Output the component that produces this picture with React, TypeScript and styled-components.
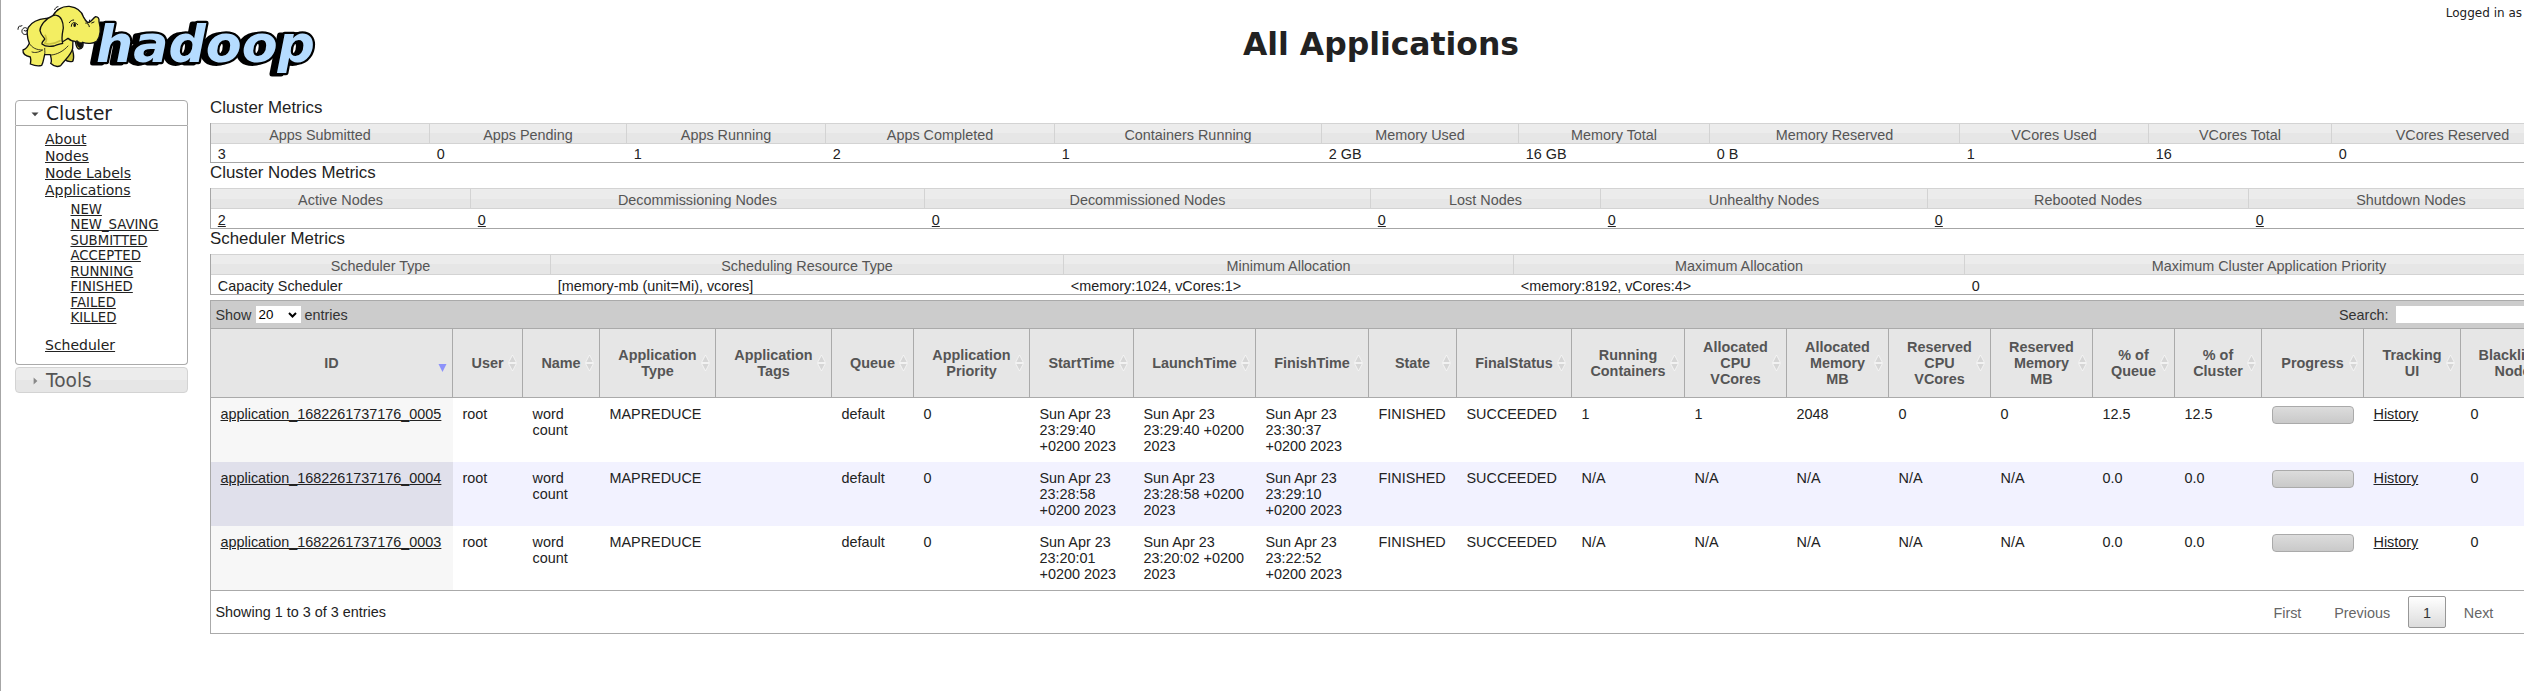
import React from "react";
import styled, { createGlobalStyle } from "styled-components";

const GlobalStyle = createGlobalStyle`
  * { box-sizing: border-box; }
  body { margin: 0; background: #fff; overflow: hidden; }
`;

const SANS = `"Liberation Sans", Arial, Helvetica, sans-serif`;
const VERA = `"DejaVu Sans", Verdana, sans-serif`;

const Page = styled.div`
  width: 100vw;
  height: 691px;
  overflow: hidden;
  border-left: 1px solid #a6a6a6;
  background: #fff;
  color: #222;
  font-family: ${SANS};
  font-size: 14.4px;
`;

const Header = styled.header`
  display: grid;
  grid-template-columns: 1242px auto 1fr;
  height: 100px;
  font-family: ${VERA};
`;

const Title = styled.h1`
  margin: 0;
  padding-top: 26px;
  font-size: 31.45px;
  line-height: 37px;
  white-space: nowrap;
`;

const UserInfo = styled.div`
  justify-self: end;
  padding: 6px 2px 0 0;
  font-size: 12px;
  line-height: 14px;
  white-space: nowrap;
`;

const Columns = styled.div`
  display: flex;
  align-items: flex-start;
`;

const Sidebar = styled.nav`
  flex: none;
  width: 173px;
  margin: 0 22px 0 14px;
  font-family: ${VERA};
`;

const SectionHead = styled.h3<{ $open?: boolean }>`
  display: flex;
  align-items: center;
  gap: 7px;
  height: 26px;
  margin: 0;
  padding: 1px 0 0 15px;
  border: 1px solid ${(p) => (p.$open ? "#aaa" : "#d3d3d3")};
  border-radius: ${(p) => (p.$open ? "4px 4px 0 0" : "4px")};
  background: ${(p) => (p.$open ? "#fff" : "linear-gradient(#ececec 0 50%, #e6e6e6 50%)")};
  color: ${(p) => (p.$open ? "#212121" : "#555")};
  font-size: 18.6px;
  font-weight: normal;
  line-height: 24px;
`;

const SectionBody = styled.div`
  height: 239px;
  margin-bottom: 2px;
  padding: 5px 0 0 29px;
  border: 1px solid #aaa;
  border-top: 0;
  border-radius: 0 0 4px 4px;
  font-size: 14px;
`;

const List = styled.ul<{ $nested?: boolean }>`
  margin: ${(p) => (p.$nested ? "3px 0 11px 25.5px" : "0")};
  padding: 0;
  list-style: none;
  font-size: ${(p) => (p.$nested ? "13.25px" : "14px")};
  line-height: ${(p) => (p.$nested ? "15.45px" : "17px")};
`;

const Link = styled.a`
  color: #222;
  text-decoration: underline;
`;

const Main = styled.main`
  flex: none;
  width: 2364px;
`;

const Heading = styled.h3`
  height: 23px;
  margin: 0;
  font-size: 16.85px;
  font-weight: normal;
  line-height: 16px;
`;

const Metrics = styled.section<{ $cols: string; $height: number }>`
  display: grid;
  grid-template-columns: ${(p) => p.$cols};
  grid-template-rows: 21px 1fr;
  height: ${(p) => p.$height}px;
  margin-bottom: 2px;
  border-left: 1px solid #a6a6a6;
  border-bottom: 1px solid #a6a6a6;
`;

const MetricHead = styled.div`
  border: 1px solid #d3d3d3;
  border-left-width: 0;
  background: linear-gradient(#ececec 0 50%, #e6e6e6 50%);
  color: #555;
  line-height: 23px;
  height: 21px;
  text-align: center;
  white-space: nowrap;
`;

const MetricValue = styled.div<{ $top: number }>`
  padding: ${(p) => p.$top}px 0 0 6.8px;
  line-height: 16px;
  white-space: nowrap;
`;

const Toolbar = styled.div`
  display: flex;
  align-items: center;
  height: 28px;
  margin-top: 5px;
  padding: 0 0 0 4.5px;
  border: 1px solid #aaa;
  border-bottom-width: 0;
  background: #ccc;
  color: #333;
  line-height: 18px;
`;

const PageSize = styled.div`
  display: flex;
  align-items: center;
  justify-content: space-between;
  width: 45px;
  height: 17px;
  margin: 0 4px 0 4px;
  padding: 0 4px 0 3px;
  background: #fff;
  color: #000;
  font-size: 13.33px;
`;

const SearchLabel = styled.label`
  display: flex;
  align-items: center;
  gap: 7px;
  width: 234px;
  margin-left: auto;
`;

const SearchBox = styled.input`
  width: 170px;
  height: 17px;
  padding: 0;
  border: 0;
  background: #fff;
`;

const AppTable = styled.table`
  width: 2364px;
  table-layout: fixed;
  border-collapse: separate;
  border-spacing: 0;
  border-left: 1px solid #aaa;
  border-right: 1px solid #aaa;
`;

const HeadCell = styled.th`
  height: 70px;
  padding: 0 0 1px;
  border: 1px solid #aaa;
  border-left-width: 0;
  background: #e6e6e6;
  color: #555;
  line-height: 16px;
  white-space: pre-line;
  vertical-align: middle;
  position: relative;
`;

const SortMark = styled.svg`
  position: absolute;
  right: 5px;
  top: 25px;
`;

const Cell = styled.td<{ $first?: boolean; $even?: boolean }>`
  height: 64px;
  padding: 8px 0 0 9.5px;
  background: ${(p) => (p.$first ? (p.$even ? "#e0e0eb" : "#f7f7f7") : p.$even ? "#f2f2ff" : "#fff")};
  line-height: 16px;
  white-space: pre-line;
  vertical-align: top;
`;

const Progress = styled.div`
  width: 82px;
  height: 18px;
  border: 1px solid #aaa;
  border-radius: 4px;
  background: linear-gradient(#dcdcdc, #c9c9c9);
`;

const Footer = styled.footer`
  display: flex;
  align-items: center;
  justify-content: space-between;
  height: 44px;
  padding-left: 4.5px;
  border: 1px solid #aaa;
`;

const Pager = styled.div`
  display: flex;
  gap: 2px;
  width: 315px;
`;

const PageButton = styled.span<{ $current?: boolean }>`
  height: 32px;
  padding: 0 14.4px;
  border: 1px solid ${(p) => (p.$current ? "#979797" : "transparent")};
  border-radius: 2px;
  background: ${(p) => (p.$current ? "linear-gradient(#fff, #dcdcdc)" : "none")};
  color: ${(p) => (p.$current ? "#333" : "#666")};
  line-height: 32px;
`;

function Logo() {
  const word = {
    fontFamily: '"DejaVu Sans"',
    fontWeight: "bold",
    fontStyle: "oblique",
    fontSize: 52,
    textLength: 219,
    lengthAdjust: "spacingAndGlyphs",
    strokeLinejoin: "round",
    paintOrder: "stroke",
  } as const;
  return (
    <svg width="330" height="84" viewBox="1 0 330 84">
      <text {...word} x="91" y="62.5" fill="#000" stroke="#000" strokeWidth="5">hadoop</text>
      <text {...word} x="96" y="62" fill="#b5dcff" stroke="#000" strokeWidth="4.5">hadoop</text>
      <g transform="translate(10 0) scale(.33333)" stroke="#111" strokeWidth="4" strokeLinejoin="round" strokeLinecap="round" fill="#f3ee62">
        <path d="M54 100C45 108 34 102 36 91C38 82 50 80 52 88C53 94 43 95 42 91M24 88C24 82 27 78 30 77M32 80L36 76M134 29C136 23 140 20 144 20M139 33L143 28" fill="none" strokeWidth="3" />
        <path d="M164 178C170 184 180 186 188 184C194 174 190 150 182 136L158 150Z" fill="#cfc93e" />
        <path d="M108 55C85 57 65 66 55 82C49 96 51 112 58 130C52 144 46 148 39 150C38 160 46 168 61 171C64 180 62 186 61 192C73 197 85 199 95 196C100 188 101 176 104 164L121 164C123 174 127 184 122 190C130 198 142 202 152 197C164 180 184 165 188 145L190 90L140 52Z" />
        <path d="M58 130C66 144 80 150 98 150C88 156 76 160 66 156M124 165C140 164 160 154 174 138M104 164C106 154 103 148 104 145" fill="none" strokeWidth="2.5" />
        <path d="M127 49C140 27 158 18 178 19C200 22 216 34 221 52C226 60 230 66 235 68C244 66 249 54 257 50C264 50 268 55 267 65C273 86 271 110 260 124C250 131 231 132 218 127C221 137 218 147 207 147C199 145 198 134 196 124C188 124 180 121 174 115C160 124 152 130 144 130L126 90Z" />
        <path d="M202 122C210 130 216 128 218 126C220 137 216 145 209 144C202 141 200 131 198 124Z" fill="#111" strokeWidth="2" />
        <path d="M127 48C105 56 90 78 90 92C92 105 101 112 105 117C98 124 95 129 96 132C105 140 121 140 132 138C144 132 154 132 158 130C153 113 158 96 160 84C160 66 153 48 140 46C136 45 131 46 127 48Z" />
        <path d="M106 106C110 116 112 122 104 130C122 135 140 128 150 122" fill="none" stroke="#c8c13e" strokeWidth="5" />
        <path d="M184 79C185 65 194 64 203 74M227 69C231 68 237 73 238 80M226 62L231 67M239 60L237 68M245 69L252 66M178 68C182 62 186 60 191 60" fill="none" strokeWidth="3" />
        <ellipse cx="194" cy="75" rx="4" ry="6" fill="#111" stroke="none" />
      </g>
    </svg>
  );
}

const Triangle = ({ down }: { down?: boolean }) => (
  <svg width="8" height="8" viewBox="0 0 8 8">
    {down ? <path d="M.5 2.5h7L4 6.3z" fill="#454545" /> : <path d="M2.6 .5v7L6.4 4z" fill="#888" />}
  </svg>
);

function SortIcon({ active }: { active?: boolean }) {
  return (
    <SortMark width="9" height="18" viewBox="0 0 9 18">
      {active ? (
        <path d="M.5 10h8l-4 8z" fill="#8d92fa" />
      ) : (
        <g fill="#d6d6d6" stroke="#f8f8f8" strokeWidth=".8">
          <path d="M4.5 1L8.4 8.5H.6z" />
          <path d="M.6 9.5h7.8L4.5 17z" />
        </g>
      )}
    </SortMark>
  );
}

type MetricTableProps = {
  title: string;
  cols: number[];
  heads: string[];
  values: string[];
  height: number;
  top: number;
  linked?: boolean;
};

function MetricTable({ title, cols, heads, values, height, top, linked }: MetricTableProps) {
  return (
    <>
      <Heading>{title}</Heading>
      <Metrics $cols={cols.map((c) => `${c}px`).join(" ")} $height={height}>
        {heads.map((h) => (
          <MetricHead key={h}>{h}</MetricHead>
        ))}
        {values.map((v, i) => (
          <MetricValue key={i} $top={top}>
            {linked ? <Link>{v}</Link> : v}
          </MetricValue>
        ))}
      </Metrics>
    </>
  );
}

const states = ["NEW", "NEW_SAVING", "SUBMITTED", "ACCEPTED", "RUNNING", "FINISHED", "FAILED", "KILLED"];

const columns: [string, number][] = [
  ["ID", 242], ["User", 70], ["Name", 77], ["Application\nType", 116], ["Application\nTags", 116],
  ["Queue", 82], ["Application\nPriority", 116], ["StartTime", 104], ["LaunchTime", 122], ["FinishTime", 113],
  ["State", 88], ["FinalStatus", 115], ["Running\nContainers", 113], ["Allocated\nCPU\nVCores", 102],
  ["Allocated\nMemory\nMB", 102], ["Reserved\nCPU\nVCores", 102], ["Reserved\nMemory\nMB", 102],
  ["% of\nQueue", 82], ["% of\nCluster", 87], ["Progress", 102], ["Tracking\nUI", 97], ["Blacklisted\nNodes", 112],
];

const day = "Sun Apr 23";
const apps = [
  { id: "0005", start: "23:29:40", launch: "23:29:40", finish: "23:30:37", used: ["1", "1", "2048", "0", "0"], pct: "12.5" },
  { id: "0004", start: "23:28:58", launch: "23:28:58", finish: "23:29:10", used: Array(5).fill("N/A"), pct: "0.0" },
  { id: "0003", start: "23:20:01", launch: "23:20:02", finish: "23:22:52", used: Array(5).fill("N/A"), pct: "0.0" },
];

export default function App() {
  return (
    <Page>
      <GlobalStyle />
      <Header>
        <Logo />
        <Title>All Applications</Title>
        <UserInfo>Logged in as</UserInfo>
      </Header>
      <Columns>
        <Sidebar>
          <SectionHead $open><Triangle down />Cluster</SectionHead>
          <SectionBody>
            <List>
              <li><Link>About</Link></li>
              <li><Link>Nodes</Link></li>
              <li><Link>Node Labels</Link></li>
              <li>
                <Link>Applications</Link>
                <List $nested>
                  {states.map((s) => <li key={s}><Link>{s}</Link></li>)}
                </List>
              </li>
              <li><Link>Scheduler</Link></li>
            </List>
          </SectionBody>
          <SectionHead><Triangle />Tools</SectionHead>
        </Sidebar>
        <Main>
          <MetricTable
            title="Cluster Metrics"
            height={40}
            top={2}
            cols={[219, 197, 199, 229, 267, 197, 191, 250, 189, 183, 242]}
            heads={["Apps Submitted", "Apps Pending", "Apps Running", "Apps Completed", "Containers Running", "Memory Used", "Memory Total", "Memory Reserved", "VCores Used", "VCores Total", "VCores Reserved"]}
            values={["3", "0", "1", "2", "1", "2 GB", "16 GB", "0 B", "1", "16", "0"]}
          />
          <MetricTable
            title="Cluster Nodes Metrics"
            height={41}
            top={3}
            linked
            cols={[260, 454, 446, 230, 327, 321, 325]}
            heads={["Active Nodes", "Decommissioning Nodes", "Decommissioned Nodes", "Lost Nodes", "Unhealthy Nodes", "Rebooted Nodes", "Shutdown Nodes"]}
            values={["2", "0", "0", "0", "0", "0", "0"]}
          />
          <MetricTable
            title="Scheduler Metrics"
            height={41}
            top={3}
            cols={[340, 513, 450, 451, 609]}
            heads={["Scheduler Type", "Scheduling Resource Type", "Minimum Allocation", "Maximum Allocation", "Maximum Cluster Application Priority"]}
            values={["Capacity Scheduler", "[memory-mb (unit=Mi), vcores]", "<memory:1024, vCores:1>", "<memory:8192, vCores:4>", "0"]}
          />
          <Toolbar>
            Show
            <PageSize>
              20
              <svg width="9" height="6" viewBox="0 0 9 6"><path d="M1 1l3.5 3.5L8 1" fill="none" stroke="#000" strokeWidth="2" /></svg>
            </PageSize>
            entries
            <SearchLabel>Search: <SearchBox /></SearchLabel>
          </Toolbar>
          <AppTable>
            <colgroup>
              {columns.map(([name, width]) => <col key={name} width={width} />)}
            </colgroup>
            <thead>
              <tr>
                {columns.map(([name], i) => (
                  <HeadCell key={name}>{name}<SortIcon active={i === 0} /></HeadCell>
                ))}
              </tr>
            </thead>
            <tbody>
              {apps.map((a, r) => {
                const even = r % 2 === 1;
                const cells: React.ReactNode[] = [
                  <Link>application_1682261737176_{a.id}</Link>,
                  "root", "word\ncount", "MAPREDUCE", "", "default", "0",
                  `${day}\n${a.start}\n+0200 2023`,
                  `${day}\n${a.launch} +0200\n2023`,
                  `${day}\n${a.finish}\n+0200 2023`,
                  "FINISHED", "SUCCEEDED", ...a.used, a.pct, a.pct,
                  <Progress />, <Link>History</Link>, "0",
                ];
                return (
                  <tr key={a.id}>
                    {cells.map((c, i) => <Cell key={i} $first={i === 0} $even={even}>{c}</Cell>)}
                  </tr>
                );
              })}
            </tbody>
          </AppTable>
          <Footer>
            <span>Showing 1 to 3 of 3 entries</span>
            <Pager>
              <PageButton>First</PageButton>
              <PageButton>Previous</PageButton>
              <PageButton $current>1</PageButton>
              <PageButton>Next</PageButton>
            </Pager>
          </Footer>
        </Main>
      </Columns>
    </Page>
  );
}
